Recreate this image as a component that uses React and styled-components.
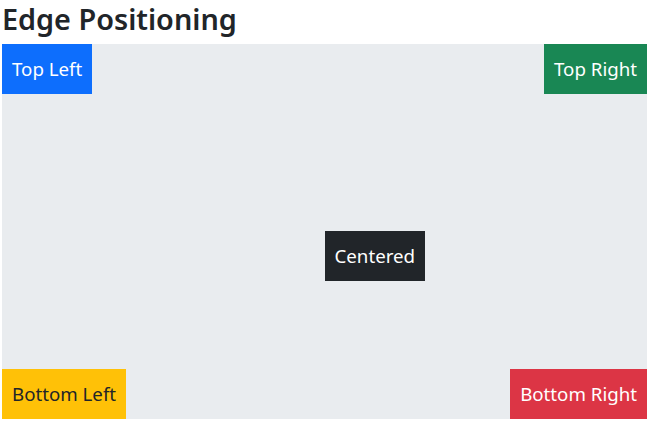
import React from 'react'
import styled, { createGlobalStyle } from 'styled-components';

const Global = createGlobalStyle`
  body {
    margin: 0;
    font-family: "Noto Sans", "Liberation Sans", sans-serif;
    color: #212529;
    background: #fff;
  }
  #root {
    padding: 2px;
  }
`;

let Title = styled.h3`
  margin: 0 0 8px;
  font-size: 28.8px;
  font-weight: 600;
  line-height: 33.6px;
`;

let Stage = styled.div`
  position: relative;
  width: 645px;
  height: 375px;
  background-color: #e9ecef;
`;

const colors = {
  primary: ['#0d6efd', '#fff'],
  success: ['#198754', '#fff'],
  warning: ['#ffc107', '#212529'],
  danger: ['#dc3545', '#fff'],
  dark: ['#212529', '#fff'],
};

// each tag is pinned to an edge of the stage; that placement is the point of the demo
let Tag = styled.div`
  position: absolute;
  padding: 10px;
  font-size: 18.7px;
  line-height: 30px;
  white-space: nowrap;
  background-color: ${p => colors[p.$tone][0]};
  color: ${p => colors[p.$tone][1]};
  ${p => p.$top !== undefined && `top: ${p.$top};`}
  ${p => p.$bottom !== undefined && `bottom: ${p.$bottom};`}
  ${p => p.$left !== undefined && `left: ${p.$left};`}
  ${p => p.$right !== undefined && `right: ${p.$right};`}
`;

const App = () => {
  return (
    <>
      <Global />
      <Title>Edge Positioning</Title>
      <Stage>
        <Tag $tone="primary" $top="0" $left="0">Top Left</Tag>
        <Tag $tone="success" $top="0" $right="0">Top Right</Tag>
        <Tag $tone="dark" $top="50%" $left="50%">Centered</Tag>
        <Tag $tone="warning" $bottom="0" $left="0">Bottom Left</Tag>
        <Tag $tone="danger" $bottom="0" $right="0">Bottom Right</Tag>
      </Stage>
    </>
  )
}

export default App
